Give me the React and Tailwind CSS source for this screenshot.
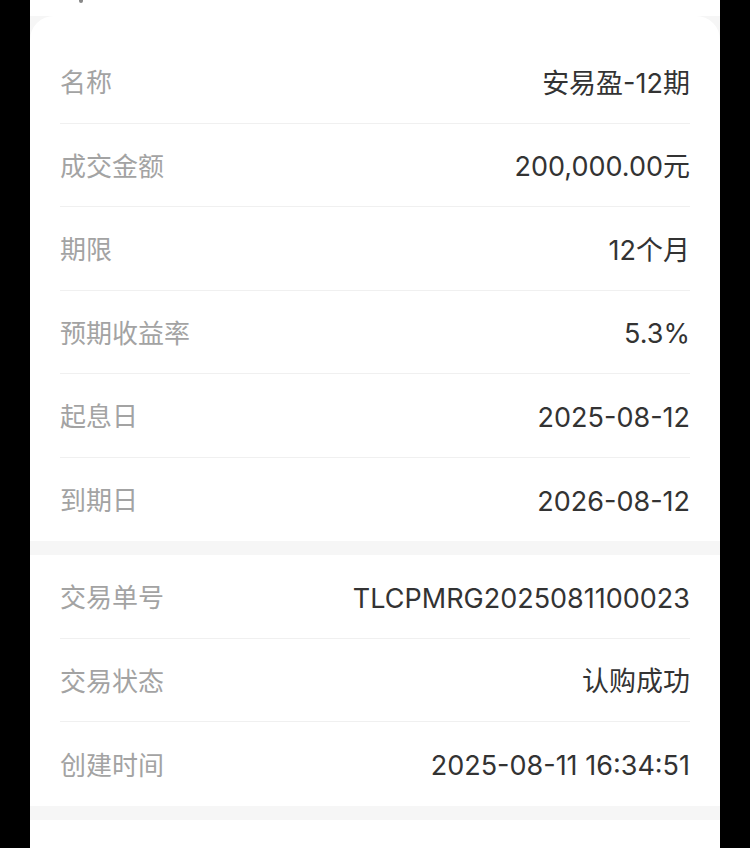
import React from 'react';

const baseInfo = [
  { label: '名称', value: '安易盈-12期' },
  { label: '成交金额', value: '200,000.00元' },
  { label: '期限', value: '12个月' },
  { label: '预期收益率', value: '5.3%' },
  { label: '起息日', value: '2025-08-12' },
  { label: '到期日', value: '2026-08-12' },
];

const tradeInfo = [
  { label: '交易单号', value: 'TLCPMRG2025081100023' },
  { label: '交易状态', value: '认购成功' },
  { label: '创建时间', value: '2025-08-11 16:34:51' },
];

function InfoRow({ label, value, last }) {
  return (
    <div className={`flex h-[83.5px] items-center justify-between pt-1 ${last ? '' : 'border-b border-[#f0f0f0]'}`}>
      <span className="text-[26px] text-[#a3a3a3]">{label}</span>
      <span className="text-[27px] text-[#333333]">{value}</span>
    </div>
  );
}

export default function App() {
  return (
    <div className="flex min-h-[848px] justify-center bg-black">
      <div
        className="w-[690px] bg-white leading-none"
        style={{ fontFamily: 'Inter, "Noto Sans CJK SC", sans-serif' }}
      >
        {/* 顶部残留的导航 */}
        <div className="h-4 bg-white pl-[49px]">
          <div className="h-[3px] w-[4px] rounded-b bg-[#888]" />
        </div>

        <div className="bg-[#f6f6f6]">
          {/* 基本信息 */}
          <div className="rounded-t-[24px] bg-white px-[30px] pt-6">
            {baseInfo.map((item, i) => (
              <InfoRow key={item.label} {...item} last={i === baseInfo.length - 1} />
            ))}
          </div>

          <div className="h-[14px]" />

          {/* 交易信息 */}
          <div className="bg-white px-[30px]">
            {tradeInfo.map((item, i) => (
              <InfoRow key={item.label} {...item} last={i === tradeInfo.length - 1} />
            ))}
          </div>

          <div className="h-[14px]" />

          <div className="h-[40px] bg-white" />
        </div>
      </div>
    </div>
  );
}
